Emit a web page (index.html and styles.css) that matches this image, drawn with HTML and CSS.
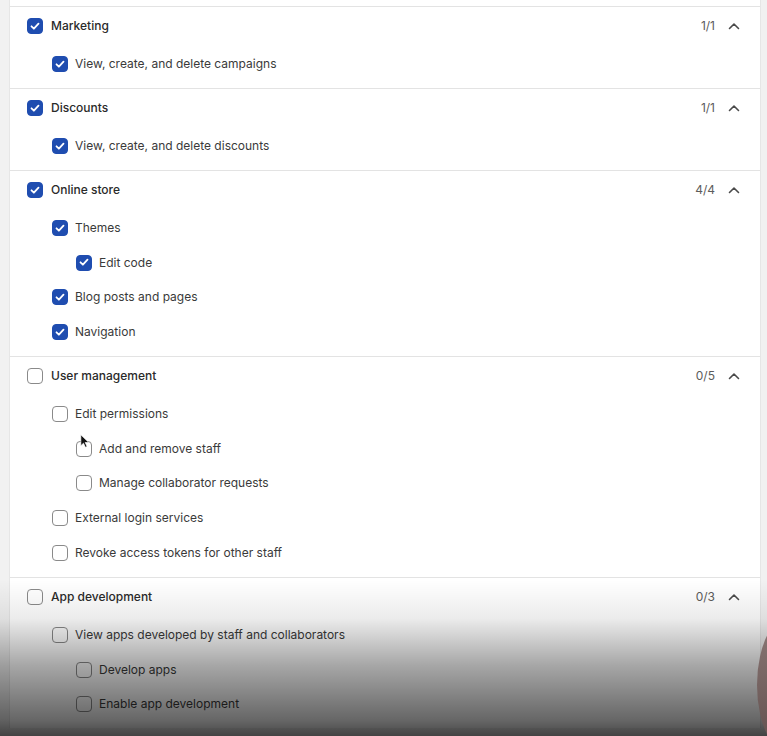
FILE: index.html
```html
<!DOCTYPE html>
<html lang="en">
<head>
  <meta charset="UTF-8" />
  <title>Staff permissions</title>
  <link rel="stylesheet" href="styles.css">
</head>
<body>
  <div class="card">
    <div class="section-top"></div>

    <div class="section">
      <div class="row header">
        <span class="box checked"><svg viewBox="0 0 16 16"><path d="M4.5 8.3l2.4 2.4 4.6-5" /></svg></span>
        <span class="label">Marketing</span>
        <span class="count">1/1</span>
        <svg class="chevron" viewBox="0 0 12 8"><path d="M1.5 6.5L6 2l4.5 4.5" /></svg>
      </div>
      <div class="children">
        <div class="row lvl1">
          <span class="box checked"><svg viewBox="0 0 16 16"><path d="M4.5 8.3l2.4 2.4 4.6-5" /></svg></span>
          <span class="label">View, create, and delete campaigns</span>
        </div>
      </div>
    </div>

    <div class="section">
      <div class="row header">
        <span class="box checked"><svg viewBox="0 0 16 16"><path d="M4.5 8.3l2.4 2.4 4.6-5" /></svg></span>
        <span class="label">Discounts</span>
        <span class="count">1/1</span>
        <svg class="chevron" viewBox="0 0 12 8"><path d="M1.5 6.5L6 2l4.5 4.5" /></svg>
      </div>
      <div class="children">
        <div class="row lvl1">
          <span class="box checked"><svg viewBox="0 0 16 16"><path d="M4.5 8.3l2.4 2.4 4.6-5" /></svg></span>
          <span class="label">View, create, and delete discounts</span>
        </div>
      </div>
    </div>

    <div class="section">
      <div class="row header">
        <span class="box checked"><svg viewBox="0 0 16 16"><path d="M4.5 8.3l2.4 2.4 4.6-5" /></svg></span>
        <span class="label">Online store</span>
        <span class="count">4/4</span>
        <svg class="chevron" viewBox="0 0 12 8"><path d="M1.5 6.5L6 2l4.5 4.5" /></svg>
      </div>
      <div class="children">
        <div class="row lvl1">
          <span class="box checked"><svg viewBox="0 0 16 16"><path d="M4.5 8.3l2.4 2.4 4.6-5" /></svg></span>
          <span class="label">Themes</span>
        </div>
        <div class="row lvl2">
          <span class="box checked"><svg viewBox="0 0 16 16"><path d="M4.5 8.3l2.4 2.4 4.6-5" /></svg></span>
          <span class="label">Edit code</span>
        </div>
        <div class="row lvl1">
          <span class="box checked"><svg viewBox="0 0 16 16"><path d="M4.5 8.3l2.4 2.4 4.6-5" /></svg></span>
          <span class="label">Blog posts and pages</span>
        </div>
        <div class="row lvl1">
          <span class="box checked"><svg viewBox="0 0 16 16"><path d="M4.5 8.3l2.4 2.4 4.6-5" /></svg></span>
          <span class="label">Navigation</span>
        </div>
      </div>
    </div>

    <div class="section">
      <div class="row header">
        <span class="box"></span>
        <span class="label">User management</span>
        <span class="count">0/5</span>
        <svg class="chevron" viewBox="0 0 12 8"><path d="M1.5 6.5L6 2l4.5 4.5" /></svg>
      </div>
      <div class="children">
        <div class="row lvl1">
          <span class="box"></span>
          <span class="label">Edit permissions</span>
        </div>
        <div class="row lvl2">
          <span class="box"></span>
          <span class="label">Add and remove staff</span>
          <svg class="cursor" viewBox="0 0 12 18"><path d="M1 1v13l3.2-3 2.3 5 2-1-2.3-4.8H10.5z" /></svg>
        </div>
        <div class="row lvl2">
          <span class="box"></span>
          <span class="label">Manage collaborator requests</span>
        </div>
        <div class="row lvl1">
          <span class="box"></span>
          <span class="label">External login services</span>
        </div>
        <div class="row lvl1">
          <span class="box"></span>
          <span class="label">Revoke access tokens for other staff</span>
        </div>
      </div>
    </div>

    <div class="section">
      <div class="row header">
        <span class="box"></span>
        <span class="label">App development</span>
        <span class="count">0/3</span>
        <svg class="chevron" viewBox="0 0 12 8"><path d="M1.5 6.5L6 2l4.5 4.5" /></svg>
      </div>
      <div class="children">
        <div class="row lvl1">
          <span class="box"></span>
          <span class="label">View apps developed by staff and collaborators</span>
        </div>
        <div class="row lvl2">
          <span class="box"></span>
          <span class="label">Develop apps</span>
        </div>
        <div class="row lvl2">
          <span class="box"></span>
          <span class="label">Enable app development</span>
        </div>
      </div>
    </div>
  </div>

  <div class="shade"></div>
  <div class="face"></div>
</body>
</html>
```

FILE: styles.css
```css
body {
  margin: 0;
  padding: 0;
  background: #f1f1f1;
  font-family: Inter, 'Noto Sans', sans-serif;
  font-size: 12px;
  color: #303030;
  overflow: hidden;
  height: 736px;
}

.card {
  margin-left: 9px;
  width: 752px;
  background: #fff;
  border-left: 1px solid #e6e6e6;
  border-right: 1px solid #e6e6e6;
  box-sizing: border-box;
}

.section-top {
  height: 6px;
}

.section {
  border-top: 1px solid #e3e3e3;
  padding: 10px 20px 15px 17px;
}

.row {
  display: flex;
  align-items: center;
  height: 18px;
  line-height: 18px;
  position: relative;
}

.children {
  margin-top: 20px;
  display: flex;
  flex-direction: column;
  gap: 16.7px;
}

.lvl1 {
  padding-left: 25px;
}

.lvl2 {
  padding-left: 49px;
}

.box {
  width: 16px;
  height: 16px;
  box-sizing: border-box;
  border: 1.5px solid #8a8a8a;
  border-radius: 4px;
  background: #fff;
  margin-right: 7px;
  flex-shrink: 0;
  display: flex;
}

.header .box {
  margin-right: 8px;
}

.box.checked {
  background: #1f4db0;
  border-color: #1f4db0;
}

.box svg {
  width: 16px;
  height: 16px;
  margin: -1.5px;
}

.box svg path {
  fill: none;
  stroke: #fff;
  stroke-width: 1.8;
  stroke-linecap: round;
  stroke-linejoin: round;
}

.header .label {
  font-weight: 500;
  color: #2a2a2a;
}

.lvl1 .label,
.lvl2 .label {
  color: #3a3a3a;
}

.count {
  margin-left: auto;
  color: #5c5c5c;
}

.chevron {
  width: 12px;
  height: 8px;
  margin-left: 13px;
}

.chevron path {
  fill: none;
  stroke: #4a4a4a;
  stroke-width: 1.6;
  stroke-linecap: round;
  stroke-linejoin: round;
}

.cursor {
  position: absolute;
  left: 53px;
  top: -6px;
  width: 10px;
  height: 15px;
}

.cursor path {
  fill: #111;
  stroke: #fff;
  stroke-width: 0.8;
}

.shade {
  position: absolute;
  left: 0;
  top: 580px;
  width: 767px;
  height: 156px;
  background: linear-gradient(to bottom, rgba(0, 0, 0, 0) 0%, rgba(0, 0, 0, 0.08) 25%, rgba(0, 0, 0, 0.35) 55%, rgba(0, 0, 0, 0.6) 90%, rgba(0, 0, 0, 0.72) 100%);
  pointer-events: none;
}

.face {
  position: absolute;
  left: 757px;
  top: 610px;
  width: 80px;
  height: 150px;
  border-radius: 50%;
  background: linear-gradient(to bottom, #8d7a78, #5e4c4a);
}
```
